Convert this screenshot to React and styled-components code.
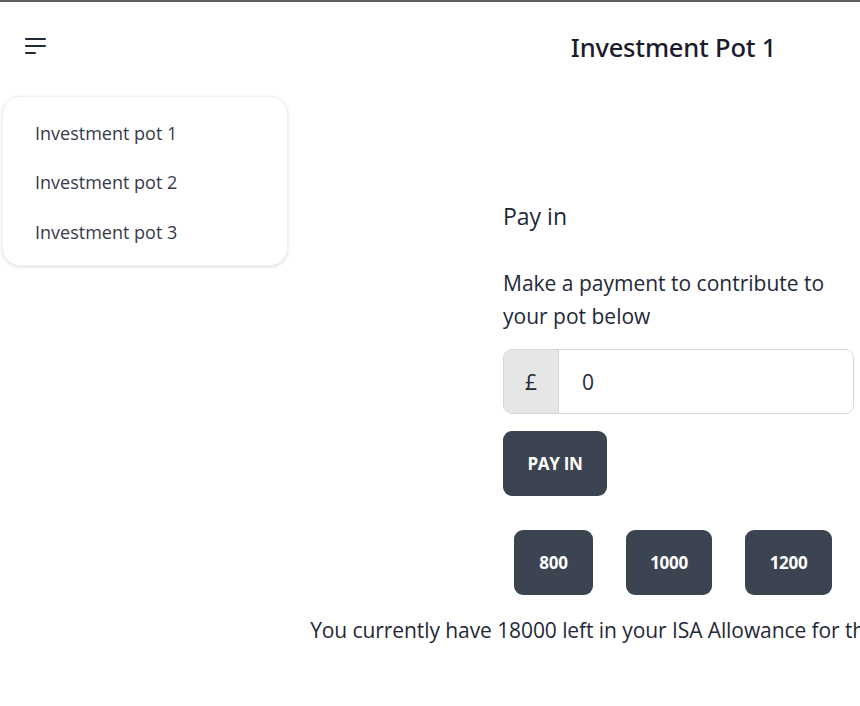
import React from "react";
import styled, { createGlobalStyle } from "styled-components";

const GlobalStyle = createGlobalStyle`
  html, body {
    margin: 0;
    padding: 0;
    background: #ffffff;
    overflow: hidden;
  }
  body {
    font-family: "Open Sans", "Noto Sans", sans-serif;
    color: #1f2937;
  }
  * { box-sizing: border-box; }
`;

const Page = styled.div`
  position: relative;
  width: 1347px;
  min-height: 706px;
`;

const TopLine = styled.div`
  height: 2px;
  background: #5e5e5e;
`;

const Header = styled.header`
  display: grid;
  grid-template-columns: 1fr auto 1fr;
  align-items: center;
  height: 90px;
`;

const MenuButton = styled.button`
  justify-self: start;
  display: flex;
  align-items: center;
  justify-content: center;
  width: 22px;
  height: 22px;
  padding: 0;
  margin: -2px 0 0 24px;
  border: none;
  background: transparent;
  color: #1f2937;
`;

const Title = styled.h1`
  margin: 0;
  font-family: "Noto Sans", "Open Sans", sans-serif;
  font-size: 25.5px;
  font-weight: 500;
  letter-spacing: -0.2px;
  color: #1c1b2e;
`;

const Dropdown = styled.ul`
  position: absolute;
  top: 96px;
  left: 2px;
  width: 286px;
  height: 170px;
  margin: 0;
  padding: 11px 0;
  list-style: none;
  background: #ffffff;
  border-radius: 18px;
  border: 1px solid #f0f0f0;
  box-shadow: 0 1px 4px rgba(0, 0, 0, 0.09), 0 1px 2px rgba(0, 0, 0, 0.05);
`;

const MenuItem = styled.li`
  display: flex;
  align-items: center;
  height: 49.5px;
  padding-left: 32px;
  font-size: 18px;
  color: #353b47;
`;

const Main = styled.main`
  display: flex;
  flex-direction: column;
  align-items: center;
  padding-top: 108px;
`;

const Card = styled.section`
  align-self: flex-start;
  margin-left: 503px;
  width: 351px;
  display: flex;
  flex-direction: column;
`;

const CardTitle = styled.h2`
  margin: 0;
  font-size: 23px;
  font-weight: 400;
  line-height: 32px;
  color: #1f2937;
`;

const Description = styled.p`
  margin: 35px 0 0;
  font-size: 21px;
  line-height: 33px;
  color: #1f2937;
`;

const InputGroup = styled.div`
  display: flex;
  margin-top: 16px;
  height: 65px;
  border: 1px solid #d6d6d6;
  border-radius: 9px;
  overflow: hidden;
`;

const Prefix = styled.span`
  display: flex;
  align-items: center;
  justify-content: center;
  width: 55px;
  background: #e5e6e6;
  border-right: 1px solid #d6d6d6;
  font-size: 21px;
  color: #1f2937;
`;

const AmountInput = styled.input`
  flex: 1;
  min-width: 0;
  border: none;
  outline: none;
  padding: 0 0 0 23px;
  font-family: inherit;
  font-size: 21px;
  color: #1f2937;
  background: #ffffff;
`;

const Button = styled.button`
  display: inline-flex;
  align-items: center;
  justify-content: center;
  height: 65px;
  padding: 0 23px;
  border: none;
  border-radius: 9px;
  background: #3d4451;
  color: #ffffff;
  font-family: inherit;
  font-size: 17px;
  font-weight: 700;
  letter-spacing: -0.3px;
  cursor: pointer;
`;

const PayButton = styled(Button)`
  align-self: flex-start;
  margin-top: 17px;
  width: 104px;
`;

const QuickRow = styled.div`
  display: flex;
  justify-content: center;
  gap: 33px;
  margin-top: 34px;
  margin-right: 1px;
`;

const QuickButton = styled(Button)`
  width: ${(p) => p.$w}px;
  padding: 0;
`;

const Allowance = styled.p`
  margin: 19px 0 0;
  font-size: 21px;
  line-height: 33px;
  white-space: nowrap;
  letter-spacing: -0.08px;
  color: #1f2937;
`;

function HamburgerIcon() {
  return (
    <svg width="22" height="22" viewBox="0 0 22 22" fill="none" stroke="currentColor" strokeWidth="2" strokeLinecap="round">
      <line x1="2" y1="4" x2="21" y2="4" />
      <line x1="2" y1="11" x2="21" y2="11" />
      <line x1="2" y1="18" x2="11" y2="18" />
    </svg>
  );
}

const pots = ["Investment pot 1", "Investment pot 2", "Investment pot 3"];
const quick = [
  { v: 800, w: 79 },
  { v: 1000, w: 86 },
  { v: 1200, w: 87 },
];

export default function App() {
  return (
    <>
      <GlobalStyle />
      <Page>
        <TopLine />
        <Header>
          <MenuButton aria-label="menu">
            <HamburgerIcon />
          </MenuButton>
          <Title>Investment Pot 1</Title>
          <span />
        </Header>
        <Dropdown>
          {pots.map((p) => (
            <MenuItem key={p}>{p}</MenuItem>
          ))}
        </Dropdown>
        <Main>
          <Card>
            <CardTitle>Pay in</CardTitle>
            <Description>
              Make a payment to contribute to
              <br />
              your pot below
            </Description>
            <InputGroup>
              <Prefix>£</Prefix>
              <AmountInput defaultValue="0" />
            </InputGroup>
            <PayButton>PAY IN</PayButton>
          </Card>
          <QuickRow>
            {quick.map((q) => (
              <QuickButton key={q.v} $w={q.w}>
                {q.v}
              </QuickButton>
            ))}
          </QuickRow>
          <Allowance>You currently have 18000 left in your ISA Allowance for the current tax year</Allowance>
        </Main>
      </Page>
    </>
  );
}
